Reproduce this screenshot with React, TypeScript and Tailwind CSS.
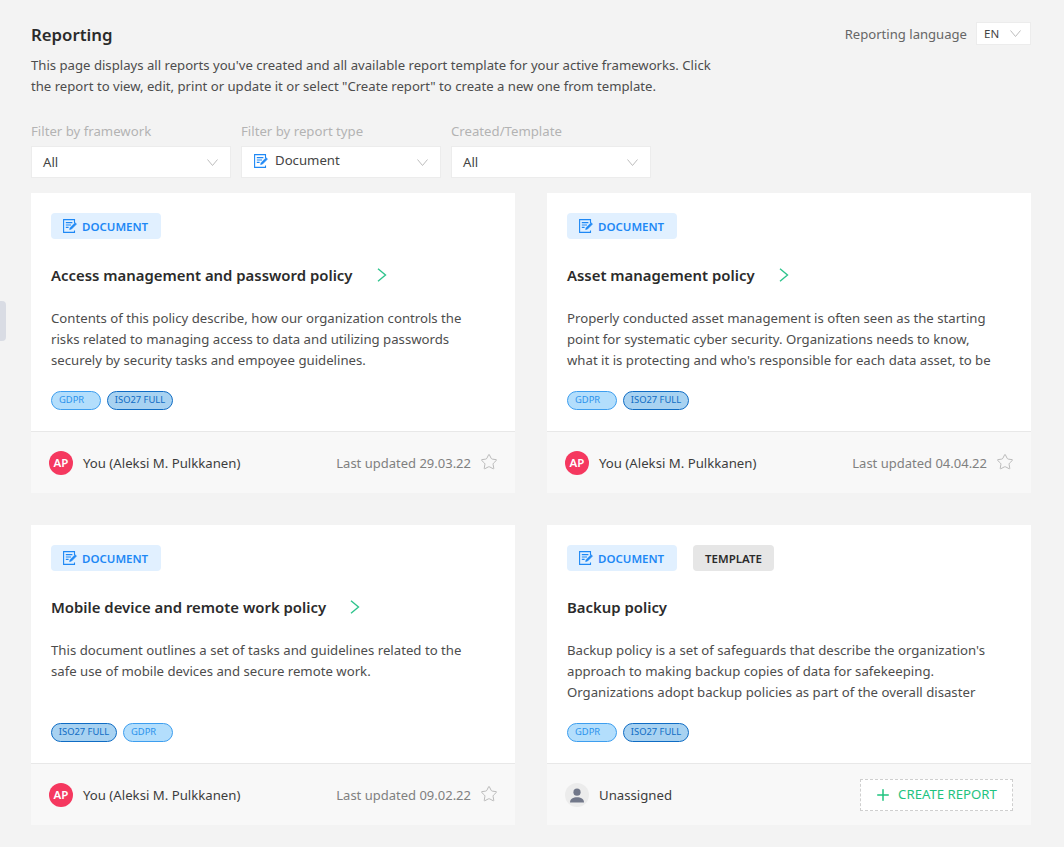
import React from 'react';
import { Plus, Star } from 'lucide-react';

const DocIcon = ({ className }: { className?: string }) => (
  <svg viewBox="0 0 16 16" fill="none" className={className} stroke="#1e88f5" strokeWidth="1.1">
    <path d="M12.5 5V1.6H1.6v12.8h10.9v-2" />
    <path d="M3.8 4.6h6.6M3.8 7h5.2M3.8 9.4h2.8" />
    <path d="M7.6 11.6l.5-1.9 5-5 1.4 1.4-5 5z" fill="#1e88f5" strokeWidth="0.6" />
  </svg>
);

const Caret = () => (
  <svg viewBox="0 0 11 7" fill="none" stroke="#bdbdbd" strokeWidth="1" className="w-[11px] h-[7px]">
    <path d="M.5.5l5 6 5-6" />
  </svg>
);

const Arrow = () => (
  <svg viewBox="0 0 10 14" fill="none" stroke="#2fc48d" strokeWidth="1.4" className="ml-[24px] w-[10px] h-[14px]">
    <path d="M1 .7l7.5 6.3L1 13.3" />
  </svg>
);

const Select = ({ label, value, icon }: { label: string; value: string; icon?: boolean }) => (
  <div className="w-[200px]">
    <div className="text-[13.2px] leading-[20px] text-[#b3b3b3]">{label}</div>
    <div className="mt-[5px] h-[32px] bg-white border border-[#ececec] flex items-center justify-between pl-[11px] pr-[12px]">
      {icon ? (
        <span className="flex items-center gap-[6px] text-[13.2px] text-[#444] -mt-[2px]">
          <DocIcon className="w-[16px] h-[16px]" />
          {value}
        </span>
      ) : (
        <span className="text-[13.2px] text-[#444] pt-[2px]">{value}</span>
      )}
      <Caret />
    </div>
  </div>
);

const Tag = ({ name }: { name: string }) =>
  name === 'GDPR' ? (
    <span className="w-[50px] h-[19px] rounded-full border border-[#3d9eef] bg-[#b3defc] text-[#2b93ec] text-[9.4px] pl-[7px] flex items-center">
      GDPR
    </span>
  ) : (
    <span className="w-[66px] h-[19px] rounded-full border border-[#0f6cc4] bg-[#a8d2f1] text-[#0f6cc4] text-[9.4px] justify-center flex items-center">
      ISO27 FULL
    </span>
  );

type Report = {
  title: string;
  lines: string[];
  tags: string[];
  updated?: string;
};

const reports: Report[] = [
  {
    title: 'Access management and password policy',
    lines: [
      'Contents of this policy describe, how our organization controls the',
      'risks related to managing access to data and utilizing passwords',
      'securely by security tasks and empoyee guidelines.',
    ],
    tags: ['GDPR', 'ISO27'],
    updated: '29.03.22',
  },
  {
    title: 'Asset management policy',
    lines: [
      'Properly conducted asset management is often seen as the starting',
      'point for systematic cyber security. Organizations needs to know,',
      "what it is protecting and who's responsible for each data asset, to be",
    ],
    tags: ['GDPR', 'ISO27'],
    updated: '04.04.22',
  },
  {
    title: 'Mobile device and remote work policy',
    lines: [
      'This document outlines a set of tasks and guidelines related to the',
      'safe use of mobile devices and secure remote work.',
    ],
    tags: ['ISO27', 'GDPR'],
    updated: '09.02.22',
  },
  {
    title: 'Backup policy',
    lines: [
      "Backup policy is a set of safeguards that describe the organization's",
      'approach to making backup copies of data for safekeeping.',
      'Organizations adopt backup policies as part of the overall disaster',
    ],
    tags: ['GDPR', 'ISO27'],
  },
];

const ReportCard = ({ report }: { report: Report }) => (
  <div className="bg-white h-[300px] flex flex-col">
    <div className="flex-1 pt-[20px] px-[20px]">
      <div className="flex gap-[16px]">
        <span className="h-[26px] w-[110px] rounded-[4px] bg-[#e1f0ff] flex items-center pl-[11px] gap-[4px] text-[11.5px] font-semibold text-[#1e88f5] pt-[1px]">
          <DocIcon className="w-[16px] h-[16px] -mt-[1px]" />
          DOCUMENT
        </span>
        {!report.updated && (
          <span className="h-[26px] w-[81px] rounded-[4px] bg-[#e6e6e6] flex items-center justify-center text-[11.5px] font-semibold text-[#2b2b2b] pt-[1px]">
            TEMPLATE
          </span>
        )}
      </div>
      <div className="mt-[23px] h-[26px] flex items-center">
        <span className="text-[14.9px] font-semibold text-[#2b2b2b]">{report.title}</span>
        {report.updated && <Arrow />}
      </div>
      <div className="mt-[20px] h-[63px] text-[13.2px] leading-[21px] text-[#4d4d4d] whitespace-nowrap">
        {report.lines.map(line => (
          <div key={line}>{line}</div>
        ))}
      </div>
      <div className="mt-[20px] flex gap-[6px]">
        {report.tags.map(tag => (
          <Tag key={tag} name={tag} />
        ))}
      </div>
    </div>
    <div className="h-[62px] bg-[#f8f8f8] border-t border-[#e8e8e8] flex items-center justify-between pl-[18px] pr-[18px]">
      {report.updated ? (
        <>
          <div className="flex items-center gap-[10px] text-[13.2px] text-[#3d3d3d]">
            <span className="w-[24px] h-[24px] rounded-full bg-[#f5385f] text-white text-[11.5px] font-semibold flex items-center justify-center">
              AP
            </span>
            <span className="pt-[2px]">You (Aleksi M. Pulkkanen)</span>
          </div>
          <div className="flex items-center gap-[9px] text-[13px] text-[#808080] -mr-[1px]">
            <span className="pt-[2px]">Last updated {report.updated}</span>
            <Star className="w-[18px] h-[18px] text-[#a6a6a6] -mt-[1px]" strokeWidth={1} />
          </div>
        </>
      ) : (
        <>
          <div className="flex items-center gap-[10px] text-[13.2px] text-[#3d3d3d]">
            <span className="w-[24px] h-[24px] rounded-full bg-[#ececec] flex items-center justify-center overflow-hidden">
              <svg viewBox="0 0 24 24" className="w-[24px] h-[24px]" fill="#72788a">
                <circle cx="12" cy="9.2" r="3.6" />
                <path d="M5 19.5c0-3.6 3.2-5.2 7-5.2s7 1.6 7 5.2z" />
              </svg>
            </span>
            <span className="pt-[2px]">Unassigned</span>
          </div>
          <div className="w-[153px] h-[32px] border border-dashed border-[#cfcfcf] bg-white flex items-center justify-center gap-[6px] text-[13.2px] text-[#1fc37f] pr-[2px]">
            <Plus className="w-[18px] h-[18px]" strokeWidth={2} />
            CREATE REPORT
          </div>
        </>
      )}
    </div>
  </div>
);

export default function App() {
  return (
    <div className="relative min-h-[847px] bg-[#f3f3f3] pl-[31px] pr-[33px] pt-[22px] font-['Noto_Sans',sans-serif] overflow-hidden">
      <div className="absolute left-0 top-[301px] w-[6px] h-[40px] bg-[#d9dce4] rounded-r-[4px]" />

      <div className="flex justify-between items-start">
        <div>
          <h1 className="text-[16.8px] leading-[26px] font-semibold text-[#2b2b2b]">Reporting</h1>
          <p className="mt-[7px] text-[13.15px] leading-[21px] text-[#4d4d4d] whitespace-nowrap">
            This page displays all reports you've created and all available report template for your active frameworks. Click
            <br />
            the report to view, edit, print or update it or select "Create report" to create a new one from template.
          </p>
        </div>
        <div className="flex items-center gap-[9px] text-[13.1px] text-[#666]">
          <span className="pt-[2px]">Reporting language</span>
          <span className="w-[55px] h-[23px] bg-white border border-[#ececec] flex items-center justify-between pl-[7px] pr-[9px] text-[11.5px] text-[#444]">
            EN
            <Caret />
          </span>
        </div>
      </div>

      <div className="mt-[24px] flex gap-[10px]">
        <Select label="Filter by framework" value="All" />
        <Select label="Filter by report type" value="Document" icon />
        <Select label="Created/Template" value="All" />
      </div>

      <div className="mt-[15px] grid grid-cols-2 gap-[32px]">
        {reports.map(report => (
          <ReportCard key={report.title} report={report} />
        ))}
      </div>
    </div>
  );
}
